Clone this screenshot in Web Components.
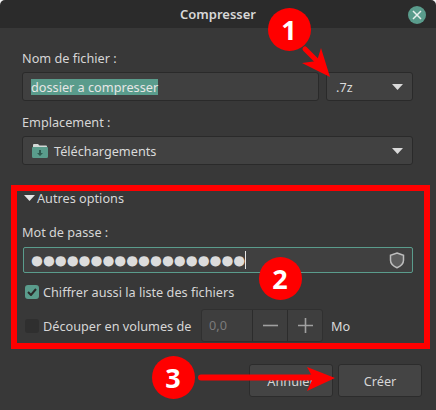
<!DOCTYPE html>
<html lang="fr">
<head>
<meta charset="utf-8">
<title>Compresser</title>
<style>
  html, body { margin: 0; padding: 0; background: #383838; }
  body { font: 12.7px "Noto Sans", "Open Sans", sans-serif; color: #dadada; }
</style>
</head>
<body>

<compress-dialog>
  <field-label>Nom de fichier :</field-label>
  <form-row>
    <text-entry grow selected>dossier a compresser</text-entry>
    <combo-box style="width:87px">.7z</combo-box>
  </form-row>
  <field-label style="margin-top:12px">Emplacement :</field-label>
  <combo-box icon="folder">Téléchargements</combo-box>

  <expander-title style="margin-top:24px">Autres options</expander-title>
  <field-label style="margin-top:16px">Mot de passe :</field-label>
  <password-entry dots="18"></password-entry>
  <check-row checked style="margin-top:10px">Chiffrer aussi la liste des fichiers</check-row>
  <form-row style="margin-top:8px;gap:0;align-items:center">
    <check-row style="width:179px">Découper en volumes de</check-row>
    <spin-button value="0,0"></spin-button>
    <span style="margin-left:8px">Mo</span>
  </form-row>

  <button-bar slot="actions">
    <push-button>Annuler</push-button>
    <push-button>Créer</push-button>
  </button-bar>
</compress-dialog>

<red-callouts></red-callouts>

<script>
class CompressDialog extends HTMLElement {
  connectedCallback() {
    this.attachShadow({ mode: 'open' });
    this.shadowRoot.innerHTML = `
      <style>
        :host { display: block; width: 436px; height: 410px; background: linear-gradient(#f4f4f4 0 6px, #383838 6px); position: relative; overflow: hidden; }
        header {
          height: 28px;
          background: #2b2b2b;
          display: flex;
          align-items: center;
          justify-content: center;
          position: relative;
          font-weight: 600;
          font-size: 13px;
          color: #d8d8d8;
          border-radius: 5px 5px 0 0;
        }
        .close {
          position: absolute;
          right: 10px;
          top: 6px;
          width: 18px;
          height: 18px;
          border-radius: 50%;
          background: #5a9c8c;
          display: flex;
          align-items: center;
          justify-content: center;
        }
        main {
          display: flex;
          flex-direction: column;
          padding: 21px 23px 0 22px;
        }
        footer { padding: 0 14px 0 0; margin-top: 22px; }
      </style>
      <header>Compresser<span class="close"><svg width="10" height="10" viewBox="0 0 10 10"><path d="M1 1l8 8M9 1L1 9" stroke="#e8f0ee" stroke-width="1.5" fill="none"/></svg></span></header>
      <main><slot></slot></main>
      <footer><slot name="actions"></slot></footer>
    `;
  }
}

class FieldLabel extends HTMLElement {
  connectedCallback() {
    this.attachShadow({ mode: 'open' });
    this.shadowRoot.innerHTML = `
      <style>:host { display: block; height: 18px; line-height: 18px; margin-bottom: 5px; color: #d6d6d6; }</style>
      <slot></slot>`;
  }
}

class FormRow extends HTMLElement {
  connectedCallback() {
    this.attachShadow({ mode: 'open' });
    this.shadowRoot.innerHTML = `
      <style>:host { display: flex; gap: 7px; }</style>
      <slot></slot>`;
  }
}

class TextEntry extends HTMLElement {
  connectedCallback() {
    this.attachShadow({ mode: 'open' });
    this.shadowRoot.innerHTML = `
      <style>
        :host { display: flex; align-items: center; flex: 1; height: 29px; box-sizing: border-box; padding-left: 8px;
                background: #404040; border: 1px solid #2a2a2a; border-radius: 3px; }
        span { background: #5a9c8c; color: #e6e6e6; line-height: 16px; }
      </style>
      <span><slot></slot></span>`;
  }
}

class ComboBox extends HTMLElement {
  connectedCallback() {
    this.attachShadow({ mode: 'open' });
    const folder = this.getAttribute('icon') === 'folder'
      ? `<svg class="ico" width="16" height="14" viewBox="0 0 16 14">
           <path d="M2 0h4l1.5 1.5H14q1 0 1 1V3H1V1q0-1 1-1z" fill="#d4d9d7"/>
           <path d="M1 3h14a1 1 0 0 1 1 1v8.5a1.5 1.5 0 0 1-1.500 1.500h-13A1.500 1.500 0 0 1 0 12.500V4a1 1 0 0 1 1-1z" fill="#5a9c8c"/>
           <path d="M7 6h2v3h2l-3 3-3-3h2z" fill="#2f5a50"/>
         </svg>` : '';
    this.shadowRoot.innerHTML = `
      <style>
        :host { display: flex; align-items: center; height: 29px; box-sizing: border-box; padding: 0 9px 0 9px;
                background: #414141; border: 1px solid #2a2a2a; border-radius: 3px; }
        .ico { margin-right: 6px; }
        .txt { flex: 1; }
        svg.arrow { display: block; }
      </style>
      ${folder}<span class="txt"><slot></slot></span>
      <svg class="arrow" width="11" height="6" viewBox="0 0 11 6"><path d="M0 0h11L5.500 6z" fill="#dadada"/></svg>`;
  }
}

class ExpanderTitle extends HTMLElement {
  connectedCallback() {
    this.attachShadow({ mode: 'open' });
    this.shadowRoot.innerHTML = `
      <style>
        :host { display: flex; align-items: center; height: 18px; gap: 2px; margin-left: 2px; color: #d6d6d6; }
      </style>
      <svg width="11" height="6" viewBox="0 0 11 6"><path d="M0 0h11L5.500 6z" fill="#e4e4e4"/></svg>
      <span><slot></slot></span>`;
  }
}

class PasswordEntry extends HTMLElement {
  connectedCallback() {
    this.attachShadow({ mode: 'open' });
    const dots = '●'.repeat(+this.getAttribute('dots'));
    this.shadowRoot.innerHTML = `
      <style>
        :host { display: flex; align-items: center; height: 26px; margin: 1px 0 0 1px; box-sizing: border-box; padding: 0 7px 0 7px;
                background: #404040; border: 1px solid #5a9c8c; border-radius: 2px; }
        .dots { font: 13.650px "DejaVu Sans", sans-serif; color: #dcdcdc; line-height: 20px; }
        .caret { width: 1px; height: 18px; background: #e6e6e6; }
        .gap { flex: 1; }
      </style>
      <span class="dots">${dots}</span><span class="caret"></span><span class="gap"></span>
      <svg width="16" height="17" viewBox="0 0 16 17">
        <path d="M8 1l6.500 2.200v5c0 3.500-3 6-6.500 7.500C4.500 14.200 1.500 11.700 1.500 8.200v-5z" fill="#5c5c5c" stroke="#bdbdbd" stroke-width="1.500"/>
      </svg>`;
  }
}

class CheckRow extends HTMLElement {
  connectedCallback() {
    this.attachShadow({ mode: 'open' });
    const on = this.hasAttribute('checked');
    this.shadowRoot.innerHTML = `
      <style>
        :host { display: flex; align-items: center; gap: 4px; height: 18px; padding-left: 3px; box-sizing: border-box; color: #d6d6d6; }
        .box { width: 14px; height: 14px; border-radius: 3px; flex: none; display: flex; align-items: center; justify-content: center;
               background: ${on ? '#5a9c8c' : '#2f2f2f'}; }
      </style>
      <span class="box">${on ? '<svg width="10" height="8" viewBox="0 0 10 8"><path d="M1 4l3 3 5-6" stroke="#2a2a2a" stroke-width="2" fill="none"/></svg>' : ''}</span>
      <span><slot></slot></span>`;
  }
}

class SpinButton extends HTMLElement {
  connectedCallback() {
    this.attachShadow({ mode: 'open' });
    this.shadowRoot.innerHTML = `
      <style>
        :host { display: flex; width: 122px; height: 33px; box-sizing: border-box; background: #3e3e3e;
                border: 1px solid #303030; border-radius: 3px; }
        .val { width: 50px; padding-left: 7px; box-sizing: border-box; line-height: 31px; color: #7b7b7b; }
        .btn { flex: 1; display: flex; align-items: center; justify-content: center; border-left: 1px solid #2c2c2c; }
      </style>
      <span class="val">${this.getAttribute('value')}</span>
      <span class="btn"><svg width="15" height="15" viewBox="0 0 15 15"><path d="M0 7.500h15" stroke="#a0a0a0" stroke-width="1.600"/></svg></span>
      <span class="btn"><svg width="15" height="15" viewBox="0 0 15 15"><path d="M0 7.500h15M7.500 0v15" stroke="#a0a0a0" stroke-width="1.600"/></svg></span>`;
  }
}

class ButtonBar extends HTMLElement {
  connectedCallback() {
    this.attachShadow({ mode: 'open' });
    this.shadowRoot.innerHTML = `
      <style>:host { display: flex; justify-content: flex-end; gap: 5px; }</style>
      <slot></slot>`;
  }
}

class PushButton extends HTMLElement {
  connectedCallback() {
    this.attachShadow({ mode: 'open' });
    this.shadowRoot.innerHTML = `
      <style>
        :host { display: flex; align-items: center; justify-content: center; width: 84px; height: 33px; box-sizing: border-box;
                background: #444; border: 1px solid #2c2c2c; border-radius: 3px; color: #d6d6d6; }
      </style>
      <slot></slot>`;
  }
}

// annotations drawn over the dialog
class RedCallouts extends HTMLElement {
  connectedCallback() {
    this.attachShadow({ mode: 'open' });
    const badge = (n, x, y) => `<b style="left:${x - 21.5}px;top:${y - 21.5}px">${n}</b>`;
    this.shadowRoot.innerHTML = `
      <style>
        :host { position: absolute; left: 0; top: 0; width: 436px; height: 410px; }
        .frame { position: absolute; left: 11px; top: 185px; width: 419px; height: 164px; box-sizing: border-box; border: 6px solid #f00; }
        svg { position: absolute; left: 0; top: 0; }
        b { position: absolute; width: 43px; height: 43px; border-radius: 50%; background: #f00; color: #fff;
            font: 700 27px/43px "Open Sans", sans-serif; text-align: center; }
      </style>
      <div class="frame"></div>
      <svg width="436" height="410" viewBox="0 0 436 410">
        <path d="M305 49L318 62" stroke="#f00" stroke-width="5" stroke-linecap="round"/>
        <path d="M330 77L321 48 317 61 302 63z" fill="#f00"/>
        <path d="M201 377.500H315" stroke="#f00" stroke-width="6" stroke-linecap="round"/>
        <path d="M335 378L307 367 313 378 307 391z" fill="#f00"/>
      </svg>
      ${badge(1, 289, 29)}${badge(2, 280, 278)}${badge(3, 173, 377)}`;
  }
}

customElements.define('compress-dialog', CompressDialog);
customElements.define('field-label', FieldLabel);
customElements.define('form-row', FormRow);
customElements.define('text-entry', TextEntry);
customElements.define('combo-box', ComboBox);
customElements.define('expander-title', ExpanderTitle);
customElements.define('password-entry', PasswordEntry);
customElements.define('check-row', CheckRow);
customElements.define('spin-button', SpinButton);
customElements.define('button-bar', ButtonBar);
customElements.define('push-button', PushButton);
customElements.define('red-callouts', RedCallouts);
</script>
</body>
</html>
